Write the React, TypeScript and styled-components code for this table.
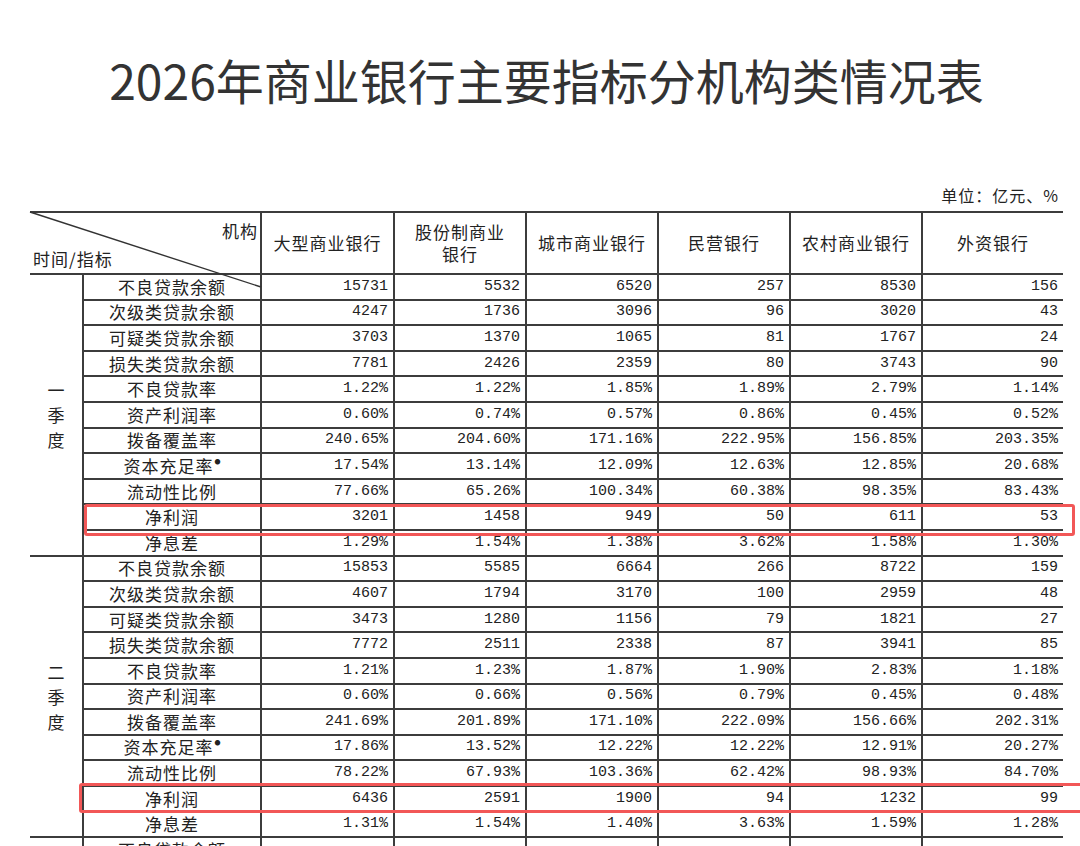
import React from 'react';
import styled, { createGlobalStyle } from 'styled-components';

const GlobalStyle = createGlobalStyle`
  html, body {
    margin: 0;
    padding: 0;
    background: #fff;
  }
  body {
    font-family: "Noto Sans CJK SC", "Noto Sans", sans-serif;
    color: #222;
  }
`;

const LINE = '2px solid #3c3c3c';

const Page = styled.div`
  height: 846px;
  overflow: hidden;
  padding: 0 17px 0 30px;
`;

const Title = styled.h1`
  margin: 0;
  padding-top: 51px;
  font-size: 48px;
  line-height: 56px;
  font-weight: 400;
  text-align: center;
  color: #333;
`;

const Unit = styled.div`
  margin: 78px 0 6px;
  padding-right: 4px;
  text-align: right;
  font-size: 16px;
  line-height: 20px;
  letter-spacing: 1px;
  color: #222;
`;

const TableWrap = styled.div`
  position: relative;
`;

const Table = styled.table`
  width: 1033px;
  table-layout: fixed;
  border-collapse: collapse;
  border-spacing: 0;
`;

const HeadCell = styled.th`
  height: 60px;
  padding: 0;
  border-top: ${LINE};
  border-bottom: ${LINE};
  border-left: ${LINE};
  font-size: 17px;
  font-weight: 400;
  line-height: 22px;
  letter-spacing: 1px;
  text-align: center;
  vertical-align: middle;
`;

const CornerCell = styled(HeadCell)`
  border-left: none;
  vertical-align: top;
`;

const Corner = styled.div`
  height: 60px;
  display: flex;
  flex-direction: column;
  justify-content: space-between;
  padding: 7px 2px 3px 3px;
  box-sizing: border-box;
  .org {
    text-align: right;
  }
  .time {
    text-align: left;
  }
`;

const Diagonal = styled.svg`
  position: absolute;
  top: 0;
  left: 0;
  overflow: visible;
  pointer-events: none;
`;

const GroupCell = styled.td`
  padding: 0;
  border-bottom: ${LINE};
  vertical-align: middle;
`;

const GroupLabel = styled.div`
  display: flex;
  flex-direction: column;
  align-items: center;
  font-size: 17px;
  line-height: 25px;
`;

const LabelCell = styled.td`
  height: 23.6px;
  padding: 0;
  border-bottom: ${LINE};
  border-left: ${LINE};
  font-size: 17px;
  line-height: 20px;
  letter-spacing: 1px;
  text-align: center;
  white-space: nowrap;
`;

const NumCell = styled.td`
  height: 23.6px;
  padding: 0 5px 0 0;
  border-bottom: ${LINE};
  border-left: ${LINE};
  font-family: "Liberation Mono", "DejaVu Sans Mono", monospace;
  font-size: 15px;
  line-height: 20px;
  text-align: right;
  white-space: nowrap;
`;

const Mark = styled.span`
  font-size: 6px;
  line-height: 0;
  vertical-align: 9px;
  letter-spacing: 0;
  margin-left: 1px;
`;

const Highlight = styled.div<{ $top: number; $left: number; $width: number; $height: number }>`
  position: absolute;
  top: ${p => p.$top}px;
  left: ${p => p.$left}px;
  width: ${p => p.$width}px;
  height: ${p => p.$height}px;
  box-sizing: border-box;
  border: 3px solid #f25757;
  border-radius: 3px;
  pointer-events: none;
`;

const banks = ['大型商业银行', '股份制商业\n银行', '城市商业银行', '民营银行', '农村商业银行', '外资银行'];

const labels = [
  '不良贷款余额',
  '次级类贷款余额',
  '可疑类贷款余额',
  '损失类贷款余额',
  '不良贷款率',
  '资产利润率',
  '拨备覆盖率',
  '资本充足率*',
  '流动性比例',
  '净利润',
  '净息差',
];

type Quarter = { name: string; rows: string[][] };

const quarters: Quarter[] = [
  {
    name: '一季度',
    rows: [
      ['15731', '5532', '6520', '257', '8530', '156'],
      ['4247', '1736', '3096', '96', '3020', '43'],
      ['3703', '1370', '1065', '81', '1767', '24'],
      ['7781', '2426', '2359', '80', '3743', '90'],
      ['1.22%', '1.22%', '1.85%', '1.89%', '2.79%', '1.14%'],
      ['0.60%', '0.74%', '0.57%', '0.86%', '0.45%', '0.52%'],
      ['240.65%', '204.60%', '171.16%', '222.95%', '156.85%', '203.35%'],
      ['17.54%', '13.14%', '12.09%', '12.63%', '12.85%', '20.68%'],
      ['77.66%', '65.26%', '100.34%', '60.38%', '98.35%', '83.43%'],
      ['3201', '1458', '949', '50', '611', '53'],
      ['1.29%', '1.54%', '1.38%', '3.62%', '1.58%', '1.30%'],
    ],
  },
  {
    name: '二季度',
    rows: [
      ['15853', '5585', '6664', '266', '8722', '159'],
      ['4607', '1794', '3170', '100', '2959', '48'],
      ['3473', '1280', '1156', '79', '1821', '27'],
      ['7772', '2511', '2338', '87', '3941', '85'],
      ['1.21%', '1.23%', '1.87%', '1.90%', '2.83%', '1.18%'],
      ['0.60%', '0.66%', '0.56%', '0.79%', '0.45%', '0.48%'],
      ['241.69%', '201.89%', '171.10%', '222.09%', '156.66%', '202.31%'],
      ['17.86%', '13.52%', '12.22%', '12.22%', '12.91%', '20.27%'],
      ['78.22%', '67.93%', '103.36%', '62.42%', '98.93%', '84.70%'],
      ['6436', '2591', '1900', '94', '1232', '99'],
      ['1.31%', '1.54%', '1.40%', '3.63%', '1.59%', '1.28%'],
    ],
  },
  // only the first row of the third quarter reaches the window edge
  {
    name: '',
    rows: [['', '', '', '', '', '']],
  },
];

const colWidths = [53, 178, 133, 132, 132, 132, 132, 141];

const renderLabel = (text: string) =>
  text.endsWith('*') ? (
    <>
      {text.slice(0, -1)}
      <Mark>●</Mark>
    </>
  ) : (
    text
  );

const App = () => {
  return (
    <Page>
      <GlobalStyle />
      <Title>2026年商业银行主要指标分机构类情况表</Title>
      <Unit>单位：亿元、%</Unit>
      <TableWrap>
        <Table>
          <colgroup>
            {colWidths.map((w, i) => (
              <col key={i} style={{ width: w }} />
            ))}
          </colgroup>
          <thead>
            <tr>
              <CornerCell colSpan={2}>
                <Corner>
                  <div className="org">机构</div>
                  <div className="time">时间/指标</div>
                </Corner>
              </CornerCell>
              {banks.map(b => (
                <HeadCell key={b}>
                  {b.split('\n').map((line, i) => (
                    <div key={i}>{line}</div>
                  ))}
                </HeadCell>
              ))}
            </tr>
          </thead>
          <tbody>
            {quarters.map((q, qi) =>
              q.rows.map((row, r) => (
                <tr key={`${qi}-${r}`}>
                  {r === 0 && (
                    <GroupCell rowSpan={q.rows.length}>
                      <GroupLabel>
                        {q.name.split('').map((c, i) => (
                          <span key={i}>{c}</span>
                        ))}
                      </GroupLabel>
                    </GroupCell>
                  )}
                  <LabelCell>{renderLabel(labels[r])}</LabelCell>
                  {row.map((v, c) => (
                    <NumCell key={c}>{v}</NumCell>
                  ))}
                </tr>
              ))
            )}
          </tbody>
        </Table>
        <Diagonal width="232" height="78">
          <line x1="0" y1="1" x2="231" y2="76" stroke="#333" strokeWidth="1.4" />
        </Diagonal>
        <Highlight $top={293} $left={54} $width={991} $height={32} />
        <Highlight $top={572} $left={49} $width={1040} $height={30} />
      </TableWrap>
    </Page>
  );
};

export default App;
